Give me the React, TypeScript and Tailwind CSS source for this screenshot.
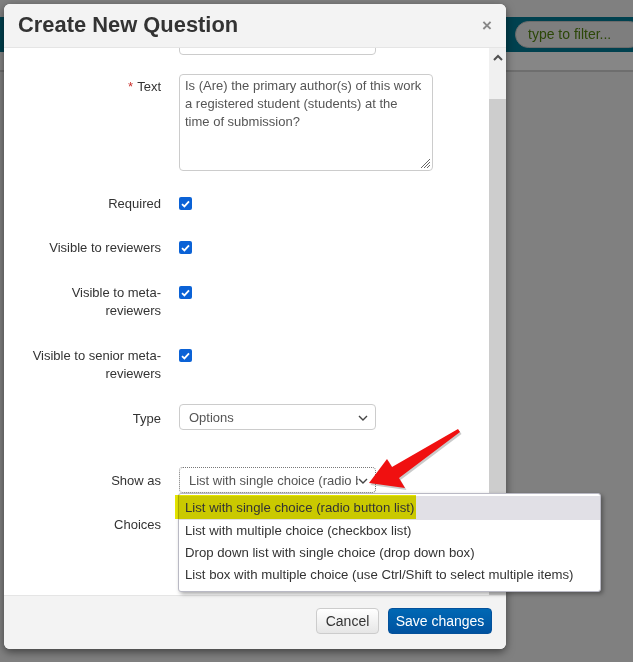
import React from "react";

function Chevron() {
  return (
    <svg width="10" height="6" viewBox="0 0 10 6" className="shrink-0">
      <path d="M1 1 L5 5 L9 1" fill="none" stroke="#444" strokeWidth="1.4" />
    </svg>
  );
}

function Check() {
  return (
    <span className="mt-[3px] flex h-[13px] w-[13px] items-center justify-center rounded-[2px] bg-[#0b62d6]">
      <svg width="9" height="8" viewBox="0 0 9 8">
        <path d="M1 4.2 L3.4 6.4 L8 1.4" fill="none" stroke="#fff" strokeWidth="1.8" />
      </svg>
    </span>
  );
}

function Row({ label, mt, children, req, lpt = "pt-[1px]" }: { label: React.ReactNode; mt: string; children?: React.ReactNode; req?: boolean; lpt?: string }) {
  return (
    <div className={`flex ${mt}`}>
      <div className={`w-[157px] text-right text-[13px] leading-[18px] text-[#333] ${lpt}`}>
        {req && <span className="text-[#c9302c] mr-[4px]">*</span>}
        {label}
      </div>
      <div className="ml-[18px] flex">{children}</div>
    </div>
  );
}

export default function App() {
  return (
    <div className="relative h-[662px] w-[633px] overflow-hidden bg-[#808080] font-['Liberation_Sans',Arial,sans-serif]">
      {/* background page */}
      <div className="mt-[17px] flex h-[35px] items-center justify-end bg-[#00414f]">
        <div className="-mr-[10px] flex h-[27px] w-[128px] items-center rounded-full border border-[#6b6b6b] bg-[#7e7e7e] pl-[12px] text-[14px] text-[#2c4708]">
          type to filter...
        </div>
      </div>
      <div className="h-[18px] bg-[#868686]" />
      <div className="h-[2px] bg-[#6e6e6e]" />

      {/* modal */}
      <div className="absolute left-[4px] top-[4px] flex h-[645px] w-[502px] flex-col overflow-hidden rounded-[6px] bg-white shadow-[0_3px_9px_rgba(0,0,0,0.5)]">
        <div className="flex h-[44px] shrink-0 items-center justify-between border-b border-[#e5e5e5] bg-[#f3f3f3] pl-[14px] pr-[14px]">
          <div className="text-[21.9px] font-bold text-[#333]">Create New Question</div>
          <div className="text-[17px] font-bold leading-none text-[#888]">×</div>
        </div>
        <div className="flex h-[547px] shrink-0">
          <div className="flex-1 overflow-hidden">
            <div className="-mt-[19px]">
              <Row label="" mt="mt-0">
                <div className="h-[26px] w-[197px] rounded-[4px] border border-[#ccc]" />
              </Row>
              <Row label="Text" mt="mt-[19px]" req lpt="pt-[4px]">
                <div className="relative h-[97px] w-[254px] whitespace-nowrap rounded-[4px] border border-[#ccc] pl-[5px] pr-[4px] pt-[2px] text-[13px] leading-[18px] text-[#555]">
                  Is (Are) the primary author(s) of this work
                  <br />
                  a registered student (students) at the
                  <br />
                  time of submission?
                  <svg className="absolute bottom-[1px] right-[1px]" width="12" height="12" viewBox="0 0 12 12">
                    <path d="M11 2 L2 11 M11 5 L5 11 M11 8 L8 11" stroke="#666" strokeWidth="1" />
                  </svg>
                </div>
              </Row>
              <Row label="Required" mt="mt-[23px]">
                <Check />
              </Row>
              <Row label="Visible to reviewers" mt="mt-[25px]">
                <Check />
              </Row>
              <Row label={<>Visible to meta-<br />reviewers</>} mt="mt-[26px]">
                <Check />
              </Row>
              <Row label={<>Visible to senior meta-<br />reviewers</>} mt="mt-[26px]">
                <Check />
              </Row>
              <div className="mt-[21px] flex">
                <div className="w-[157px] pt-[6px] text-right text-[13px] leading-[18px] text-[#333]">Type</div>
                <div className="ml-[18px] flex h-[26px] w-[197px] items-center justify-between rounded-[4px] border border-[#ccc] pl-[9px] pr-[7px] pt-[2px] text-[13px] text-[#555]">
                  <span>Options</span>
                  <Chevron />
                </div>
              </div>
              <div className="mt-[37px] flex">
                <div className="w-[157px] pt-[5px] text-right text-[13px] leading-[18px] text-[#333]">Show as</div>
                <div className="ml-[18px] flex h-[26px] w-[197px] items-center rounded-[4px] border border-dotted border-[#777] pl-[9px] pr-[7px] pt-[2px] text-[13px] text-[#555]">
                  <span className="flex-1 overflow-hidden whitespace-nowrap">List with single choice (radio button list)</span>
                  <Chevron />
                </div>
              </div>
              <div className="mt-[22px] flex">
                <div className="w-[157px] pt-[1px] text-right text-[13px] leading-[18px] text-[#333]">Choices</div>
              </div>
            </div>
          </div>
          <div className="flex w-[17px] shrink-0 flex-col">
            <div className="flex h-[51px] justify-center bg-[#f0f0f0] pt-[6px]">
              <svg width="10" height="7" viewBox="0 0 10 7">
                <path d="M1 6 L5 2 L9 6" fill="none" stroke="#505050" strokeWidth="2" />
              </svg>
            </div>
            <div className="flex-1 bg-[#cdcdcd]" />
          </div>
        </div>
        <div className="flex flex-1 items-start justify-end gap-[9px] border-t border-[#e5e5e5] bg-[#f3f3f3] pr-[14px] pt-[12px]">
          <div className="flex h-[26px] w-[63px] items-center justify-center rounded-[4px] border border-[#ccc] bg-gradient-to-b from-white to-[#e6e6e6] text-[14px] text-[#333]">
            Cancel
          </div>
          <div className="flex h-[26px] w-[104px] items-center justify-center rounded-[4px] border border-[#04519b] bg-gradient-to-b from-[#0068b4] to-[#0052a0] text-[14px] text-white">
            Save changes
          </div>
        </div>
      </div>

      {/* dropdown list */}
      <div className="absolute left-[178px] top-[493px] h-[99px] w-[423px] rounded-[3px] border border-[#b9b9c4] bg-white pt-[2px] text-[13.2px] text-[#333] shadow-[2px_2px_4px_rgba(0,0,0,0.35)]">
        <div className="flex h-[24px] items-center bg-[#e1e0e6] pl-[6px]">
          <span className="relative z-10">List with single choice (radio button list)</span>
        </div>
        <div className="flex h-[22px] items-center pl-[6px]">List with multiple choice (checkbox list)</div>
        <div className="flex h-[22px] items-center pl-[6px]">Drop down list with single choice (drop down box)</div>
        <div className="flex h-[22px] items-center pl-[6px]">List box with multiple choice (use Ctrl/Shift to select multiple items)</div>
      </div>
      {/* yellow highlighter */}
      <div className="absolute left-[175px] top-[495px] h-[24px] w-[241px] bg-[#e5e500] mix-blend-multiply" />

      {/* red arrow */}
      <svg className="absolute left-0 top-0" width="633" height="662" viewBox="0 0 633 662">
        <polygon
          points="369,483 387,459 392,467 458,429 460,432 399,478 405,488"
          fill="#666"
          opacity="0.35"
          transform="translate(1.5,2)"
        />
        <polygon points="369,483 387,459 392,467 458,429 460,432 399,478 405,488" fill="#f01010" />
      </svg>
    </div>
  );
}
